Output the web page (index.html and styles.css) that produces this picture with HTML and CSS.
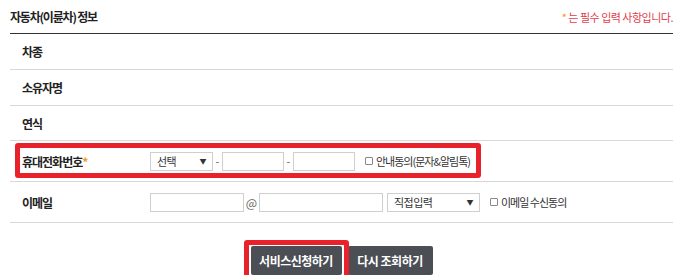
FILE: index.html
```html
<!doctype html>
<html>
<head>
<meta charset="utf-8">
<link rel="stylesheet" href="styles.css">
<title>자동차 정보</title>
</head>

<body>

<div id="wrap">
<div class="head">
	<div class="title">자동차(이륜차) 정보</div>
	<div class="note"><span class="star">*</span> 는 필수 입력 사항입니다.</div>
</div>

<div class="table">
	<div class="row">
		<div class="label">차종</div>
		<div class="value"></div>
	</div>
	<div class="row">
		<div class="label">소유자명</div>
		<div class="value"></div>
	</div>
	<div class="row short">
		<div class="label">연식</div>
		<div class="value"></div>
	</div>
	<div class="row tall">
		<div class="label">휴대전화번호<span class="star">*</span></div>
		<div class="value">
			<div class="select sel-phone"><span>선택</span><span class="arrow">▼</span></div>
			<span class="sep">-</span>
			<div class="input w62"></div>
			<span class="sep">-</span>
			<div class="input w62"></div>
			<label class="check"><span class="box"></span>안내동의(문자&amp;알림톡)</label>
		</div>
		<div class="mark mark-phone"></div>
	</div>
	<div class="row tall">
		<div class="label">이메일</div>
		<div class="value">
			<div class="input w94"></div>
			<span class="at">@</span>
			<div class="input w124"></div>
			<div class="select sel-mail"><span>직접입력</span><span class="arrow">▼</span></div>
			<label class="check"><span class="box"></span>이메일 수신동의</label>
		</div>
	</div>
</div>

<div class="btns">
	<div class="btn-wrap">
		<a class="btn btn1">서비스신청하기</a>
		<div class="mark mark-btn"></div>
	</div>
	<a class="btn btn2">다시 조회하기</a>
</div>
</div>

</body>
</html>
```

FILE: styles.css
```css
*
{
	margin:0;
	padding:0;
	box-sizing:border-box;
}
body
{
	font-family:"Noto Sans CJK KR","Liberation Sans",sans-serif;
	font-size:12px;
	color:#222;
	background:#fff;
}
#wrap
{
	width:663px;
	margin-left:10px;
}
.head
{
	height:33px;
	display:flex;
	align-items:center;
	justify-content:space-between;
}
.title
{
	font-size:12px;
	font-weight:bold;
	letter-spacing:-1.2px;
	color:#222;
}
.note
{
	font-size:11px;
	letter-spacing:-0.5px;
	color:#e2404a;
}
.star
{
	color:#f7941d;
}
.table
{
	border-top:1px solid #333;
}
.row
{
	position:relative;
	display:flex;
	align-items:center;
	height:36px;
	border-bottom:1px solid #d8d8d8;
}
.row.short
{
	height:35px;
}
.row.tall
{
	height:41px;
}
.label
{
	width:140px;
	padding-left:12px;
	font-weight:bold;
	letter-spacing:-1px;
}
.value
{
	display:flex;
	align-items:center;
	font-size:11px;
	color:#333;
	white-space:nowrap;
}
.input,.select
{
	height:19px;
	border:1px solid #cfcfcf;
	background:#fff;
}
.w62{width:62px;}
.w94{width:94px;}
.w124{width:124px;}
.select
{
	display:flex;
	align-items:center;
	justify-content:space-between;
	padding:0 6px 0 6px;
	letter-spacing:-0.5px;
}
.sel-phone{width:63px;}
.sel-mail{width:93px;margin-left:4px;}
.arrow
{
	font-size:7px;
	color:#333;
}
.sep
{
	width:9px;
	text-align:center;
	color:#666;
}
.at
{
	width:15px;
	text-align:center;
	color:#666;
	font-size:12px;
}
.check
{
	display:flex;
	align-items:center;
	gap:3px;
	margin-left:10px;
	letter-spacing:-1px;
	color:#333;
}
.box
{
	width:8px;
	height:8px;
	border:1px solid #888;
	border-radius:1px;
}
.mark
{
	position:absolute;
	border:5px solid #e8212b;
	border-radius:3px;
}
.mark-phone
{
	left:5px;
	top:2px;
	width:466px;
	height:35px;
}
.btns
{
	display:flex;
	justify-content:center;
	gap:6px;
	padding-top:23px;
}
.btn-wrap
{
	position:relative;
}
.btn
{
	display:flex;
	align-items:center;
	justify-content:center;
	height:29px;
	background:#4b4e54;
	color:#fff;
	font-size:12px;
	font-weight:bold;
	letter-spacing:-0.5px;
	border-radius:2px;
}
.btn1{width:91px;}
.btn2{width:85px;}
.mark-btn
{
	left:-7px;
	top:-6px;
	width:105px;
	height:40px;
}
```
